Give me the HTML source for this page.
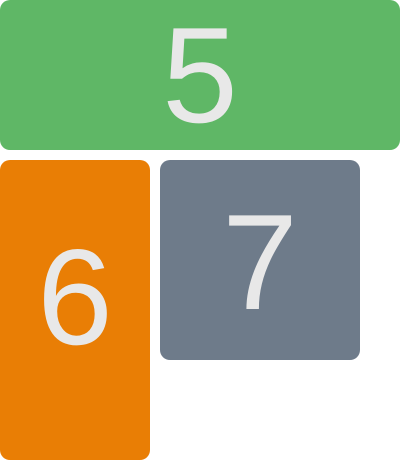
<!DOCTYPE html>
<html><head><style>
html,body{margin:0;padding:0;width:400px;height:460px;background:#fff;overflow:hidden}
.b{position:absolute;border-radius:10px;color:#e8e8e8;font-family:"Liberation Sans",sans-serif;font-size:136px;display:flex;align-items:center;justify-content:center;line-height:1;box-sizing:border-box}
</style></head><body>
<div class="b" style="left:0;top:0;width:400px;height:150px;background:#5fb766">5</div>
<div class="b" style="left:0;top:160px;width:150px;height:300px;background:#e97e05;padding-bottom:26px">6</div>
<div class="b" style="left:160px;top:160px;width:200px;height:200px;background:#6e7b8a;padding-top:4px">7</div>
</body></html>
